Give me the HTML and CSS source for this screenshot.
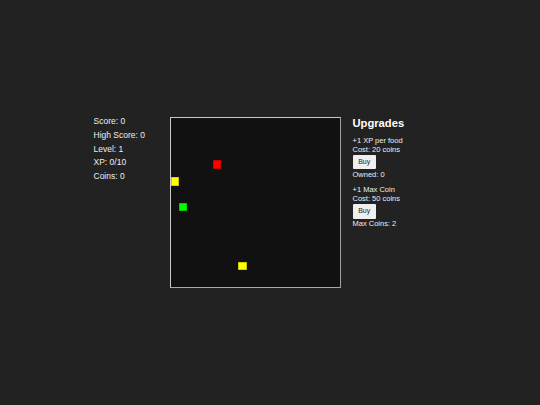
FILE: index.html
```html
<!DOCTYPE html>
<html>
<head>
<meta charset="utf-8">
<link rel="stylesheet" href="styles.css">
</head>
<body>
<div class="game">
  <div class="stats">
    <div class="stat">Score: 0</div>
    <div class="stat">High Score: 0</div>
    <div class="stat">Level: 1</div>
    <div class="stat">XP: 0/10</div>
    <div class="stat">Coins: 0</div>
  </div>
  <div class="board">
    <div class="cell food" style="left:25%;top:25%"></div>
    <div class="cell coin" style="left:0%;top:35%"></div>
    <div class="cell snake" style="left:5%;top:50%"></div>
    <div class="cell coin" style="left:40%;top:85%"></div>
  </div>
  <div class="upgrades">
    <h3 class="title">Upgrades</h3>
    <div class="upgrade">
      <div class="line">+1 XP per food</div>
      <div class="line">Cost: 20 coins</div>
      <button class="buy">Buy</button>
      <div class="line">Owned: 0</div>
    </div>
    <div class="upgrade">
      <div class="line">+1 Max Coin</div>
      <div class="line">Cost: 50 coins</div>
      <button class="buy">Buy</button>
      <div class="line">Max Coins: 2</div>
    </div>
  </div>
</div>
</body>
</html>
```

FILE: styles.css
```css
html, body {
  margin: 0;
  padding: 0;
  background: #222222;
  width: 540px;
  height: 405px;
  overflow: hidden;
  font-family: "Liberation Sans", Arial, sans-serif;
  color: #eeeeee;
}

.game {
  display: flex;
  justify-content: center;
  align-items: flex-start;
  gap: 12px;
  padding-top: 117px;
}

.stats {
  width: 64px;
  margin-top: -1.7px;
  font-size: 8.5px;
}

.stat {
  line-height: 13.67px;
  white-space: nowrap;
}

.board {
  position: relative;
  width: 169px;
  height: 169px;
  background: #111111;
  border: 1px solid #c8c8c8;
  border-right-color: #a0a0a0;
  border-bottom-color: #a8a8a8;
}

.cell {
  position: absolute;
  width: 5%;
  height: 5%;
  box-shadow: inset 0 0 0 0.6px rgba(0, 0, 0, 0.35);
}

.food { background: #ff0000; }
.coin { background: #ffff00; }
.snake { background: #00ff00; }

.upgrades {
  width: 94px;
  margin-top: -0.3px;
}

.title {
  margin: 0 0 6px 0;
  font-size: 11.2px;
  font-weight: bold;
  line-height: 12.9px;
  color: #ffffff;
}

.upgrade {
  margin-bottom: 6px;
  font-size: 7.5px;
}

.line {
  line-height: 9px;
  white-space: nowrap;
}

.buy {
  display: block;
  margin: 1.2px 0 0.8px 0;
  padding: 0 5.7px;
  height: 14.4px;
  border: 0;
  border-radius: 1px;
  background: #efefef;
  color: #222222;
  font-family: "Liberation Sans", Arial, sans-serif;
  font-size: 7px;
  line-height: 14.4px;
}
```
